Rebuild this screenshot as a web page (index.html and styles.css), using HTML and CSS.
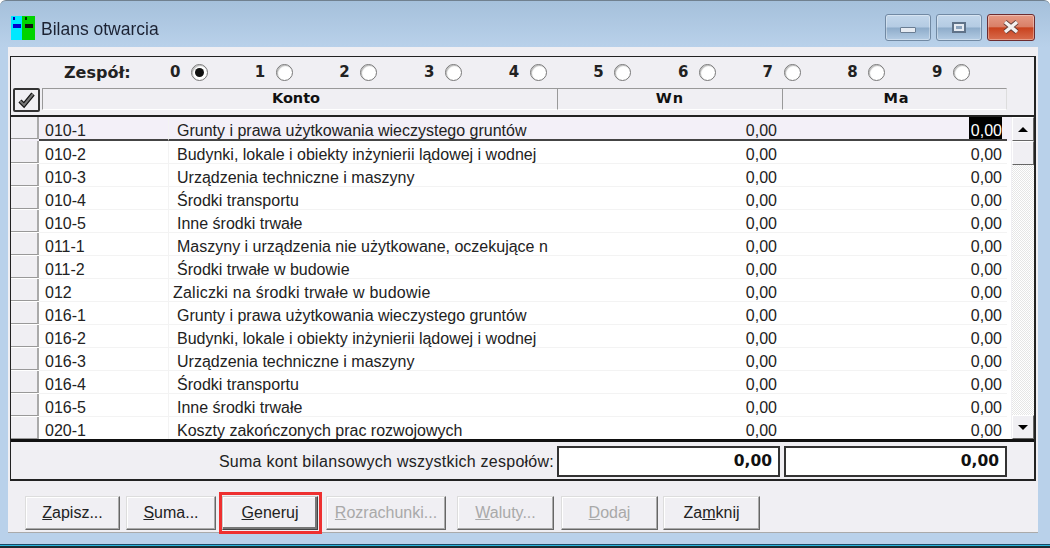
FILE: index.html
```html
<!DOCTYPE html>
<html lang="pl">
<head>
<meta charset="utf-8">
<title>Bilans otwarcia</title>
<link rel="stylesheet" href="styles.css">
</head>
<body>
<div class="window">
  <div class="titlebar">
    <svg class="app-icon" width="24" height="24" viewBox="0 0 24 24">
      <rect width="11" height="24" fill="#00e8ff"/>
      <rect x="11" width="13" height="24" fill="#00d400"/>
      <rect x="2" y="1" width="2" height="3" fill="#0000c0"/>
      <rect x="14" y="1" width="2" height="3" fill="#003000"/>
      <rect x="2" y="8" width="8" height="4" fill="#0000d0"/>
      <rect x="14" y="8" width="8" height="4" fill="#101010"/>
    </svg>
    <span class="title">Bilans otwarcia</span>
    <div class="controls">
      <div class="ctl"><span class="glyph-min"></span></div>
      <div class="ctl"><span class="glyph-max"></span></div>
      <div class="ctl close">
        <svg width="18" height="14" viewBox="0 0 18 14"><path d="M3 2 L15 12 M15 2 L3 12" stroke="#5d3a36" stroke-width="5" fill="none"/><path d="M3 2 L15 12 M15 2 L3 12" stroke="#f4f1f0" stroke-width="3.4" fill="none"/></svg>
      </div>
    </div>
  </div>
  <div class="client">
    <div class="panel">
      <div class="teams">
        <span class="team-label">Zespół:</span>
        <div class="team-list">
          <div class="team"><b>0</b><span class="radio on"></span></div>
          <div class="team"><b>1</b><span class="radio"></span></div>
          <div class="team"><b>2</b><span class="radio"></span></div>
          <div class="team"><b>3</b><span class="radio"></span></div>
          <div class="team"><b>4</b><span class="radio"></span></div>
          <div class="team"><b>5</b><span class="radio"></span></div>
          <div class="team"><b>6</b><span class="radio"></span></div>
          <div class="team"><b>7</b><span class="radio"></span></div>
          <div class="team"><b>8</b><span class="radio"></span></div>
          <div class="team"><b>9</b><span class="radio"></span></div>
        </div>
      </div>
      <div class="head">
        <div class="check-btn">
          <svg width="20" height="18" viewBox="0 0 20 18"><path d="M3 10 L7 14 L16 3" stroke="#111" stroke-width="4.4" fill="none"/><path d="M3 10 L7 14 L16 3" stroke="#777" stroke-width="2" fill="none"/></svg>
        </div>
        <div class="hcell konto">Konto</div>
        <div class="hcell wn">Wn</div>
        <div class="hcell ma">Ma</div>
      </div>
      <div class="grid-area">
        <div class="rows">
          <div class="row first"><i class="mark"></i><span class="code">010-1</span><span class="name">Grunty i prawa użytkowania wieczystego gruntów</span><span class="num">0,00</span><span class="num"><em class="sel">0,00</em></span></div>
          <div class="row"><i class="mark"></i><span class="code">010-2</span><span class="name">Budynki, lokale i obiekty inżynierii lądowej i wodnej</span><span class="num">0,00</span><span class="num">0,00</span></div>
          <div class="row"><i class="mark"></i><span class="code">010-3</span><span class="name">Urządzenia techniczne i maszyny</span><span class="num">0,00</span><span class="num">0,00</span></div>
          <div class="row"><i class="mark"></i><span class="code">010-4</span><span class="name">Środki transportu</span><span class="num">0,00</span><span class="num">0,00</span></div>
          <div class="row"><i class="mark"></i><span class="code">010-5</span><span class="name">Inne środki trwałe</span><span class="num">0,00</span><span class="num">0,00</span></div>
          <div class="row"><i class="mark"></i><span class="code">011-1</span><span class="name">Maszyny i urządzenia nie użytkowane, oczekujące n</span><span class="num">0,00</span><span class="num">0,00</span></div>
          <div class="row"><i class="mark"></i><span class="code">011-2</span><span class="name">Środki trwałe w budowie</span><span class="num">0,00</span><span class="num">0,00</span></div>
          <div class="row"><i class="mark"></i><span class="code">012</span><span class="name shifted">Zaliczki na środki trwałe w budowie</span><span class="num">0,00</span><span class="num">0,00</span></div>
          <div class="row"><i class="mark"></i><span class="code">016-1</span><span class="name">Grunty i prawa użytkowania wieczystego gruntów</span><span class="num">0,00</span><span class="num">0,00</span></div>
          <div class="row"><i class="mark"></i><span class="code">016-2</span><span class="name">Budynki, lokale i obiekty inżynierii lądowej i wodnej</span><span class="num">0,00</span><span class="num">0,00</span></div>
          <div class="row"><i class="mark"></i><span class="code">016-3</span><span class="name">Urządzenia techniczne i maszyny</span><span class="num">0,00</span><span class="num">0,00</span></div>
          <div class="row"><i class="mark"></i><span class="code">016-4</span><span class="name">Środki transportu</span><span class="num">0,00</span><span class="num">0,00</span></div>
          <div class="row"><i class="mark"></i><span class="code">016-5</span><span class="name">Inne środki trwałe</span><span class="num">0,00</span><span class="num">0,00</span></div>
          <div class="row"><i class="mark"></i><span class="code">020-1</span><span class="name">Koszty zakończonych prac rozwojowych</span><span class="num">0,00</span><span class="num">0,00</span></div>
        </div>
        <div class="scrollbar">
          <div class="sb-btn"><span class="arrow up"></span></div>
          <div class="sb-btn"></div>
          <div class="sb-track"></div>
          <div class="sb-btn"><span class="arrow down"></span></div>
        </div>
      </div>
      <div class="totals">
        <span class="totals-label">Suma kont bilansowych wszystkich zespołów:</span>
        <div class="total wn-total">0,00</div>
        <div class="total ma-total">0,00</div>
      </div>
    </div>
    <div class="buttons">
      <div class="btn b-zapisz"><span><u>Z</u>apisz...</span></div>
      <div class="btn b-suma"><span><u>S</u>uma...</span></div>
      <div class="btn b-gen"><span><u>G</u>eneruj</span></div>
      <div class="btn b-roz off"><span><u>R</u>ozrachunki...</span></div>
      <div class="btn b-wal off"><span><u>W</u>aluty...</span></div>
      <div class="btn b-dod off"><span><u>D</u>odaj</span></div>
      <div class="btn b-zam"><span>Za<u>m</u>knij</span></div>
    </div>
  </div>
</div>
</body>
</html>
```
FILE: styles.css
```css
* { box-sizing: border-box; }
html, body { margin: 0; padding: 0; }
body { width: 1050px; height: 548px; background: #fff; overflow: hidden; font-family: "Liberation Sans", Arial, sans-serif; font-size: 16px; color: #222; }
.window { width: 1050px; height: 545px; display: flex; flex-direction: column; padding: 0 12px 11px 8px; border-top: 1px solid #70808f; border-radius: 6px 6px 0 0; border-bottom: 1px solid #1a4a66; box-shadow: 0 1px 0 #26b6dc, 0 3px 0 #1e2a30; background: linear-gradient(180deg, #a5c0db 0, #b9d1ea 46px, #b9d1ea 100%); filter: blur(.35px); }
.titlebar { height: 46px; flex: none; display: flex; align-items: center; padding: 9px 0 0 3px; }
.app-icon { display: block; margin-top: -1px; }
.title { margin-left: 6px; margin-top: 2px; font-size: 17.5px; color: #1c2233; }
.controls { margin-left: auto; display: flex; gap: 5px; margin-top: -3px; margin-right: 3px; }
.ctl { width: 46px; height: 27px; border: 1px solid #7189a3; border-radius: 3px; background: linear-gradient(180deg, #c3d7eb 0, #b4cbe3 48%, #8eacca 52%, #b4cce4 100%); display: flex; align-items: center; justify-content: center; box-shadow: inset 0 0 0 1px rgba(255,255,255,.35); }
.close { width: 48px; background: linear-gradient(180deg, #e59a86 0, #d98068 46%, #c9431f 52%, #d86c4d 100%); border-color: #6d2c30; }
.glyph-min { width: 16px; height: 6px; background: #e6ebf2; border: 1px solid #6a7d93; border-radius: 1px; margin-top: 6px; }
.glyph-max { width: 14px; height: 11px; border: 2px solid #5f7288; background: #e6ebf2; box-shadow: inset 0 0 0 2px #e6ebf2, inset 0 0 0 4px #8ba3bd; }
.client { width: 1030px; height: 486px; flex: none; background: #f0eff3; padding: 9px 2px 0 2px; border-bottom: 1px solid #aaa; display: flex; flex-direction: column; }
.panel { width: 1026px; height: 425px; flex: none; border: 1px solid #222; border-right-width: 2px; border-bottom-width: 2px; display: flex; flex-direction: column; }
.teams { height: 30px; flex: none; display: flex; align-items: center; font-family: "DejaVu Sans", sans-serif; font-weight: 700; font-size: 15px; }
.team-label { width: 155px; padding-left: 53px; font-size: 16px; white-space: nowrap; }
.team-list { display: flex; }
.team { width: 84.67px; display: flex; align-items: center; gap: 11px; padding-left: 4px; }
.team b { width: 10px; }
.radio { width: 17px; height: 17px; border-radius: 50%; border: 1px solid #777; background: #fff; box-shadow: inset 1px 1px 1px #bbb; display: block; position: relative; }
.radio.on::after { content: ""; position: absolute; left: 3px; top: 3px; width: 9px; height: 9px; border-radius: 50%; background: #111; }
.head { height: 30px; flex: none; display: flex; align-items: flex-start; border-bottom: 2px solid #222; padding: 1px 0 0 2px; font-family: "DejaVu Sans", sans-serif; font-weight: 700; font-size: 14.5px; }
.check-btn { width: 27px; height: 24px; border: 2px solid #333; border-radius: 2px; display: flex; align-items: center; justify-content: center; background: #f0eff3; }
.hcell { height: 22px; border-left: 1px solid #999; border-top: 1px solid #999; border-bottom: 1px solid #fff; text-align: center; line-height: 18px; color: #111; }
.konto { width: 515px; margin-left: 2px; padding-right: 8px; }
.wn { width: 225px; letter-spacing: 1px; }
.ma { width: 225px; letter-spacing: 1px; padding-left: 4px; border-right: 1px solid #ddd; }
.grid-area { flex: 1; display: flex; min-height: 0; }
.rows { width: 1000px; flex: none; }
.row { height: 23px; display: grid; grid-template-columns: 28px 129px 387px 227px 225px; background: #fff; align-items: stretch; line-height: 19px; }
.row.first { background: #f3f0f8; height: 24px; }
.row span { white-space: nowrap; overflow: hidden; padding-top: 4px; border-bottom: 1px solid #f3f3f3; }
.row.first span { border-bottom: 2px solid #444; }
.mark { display: block; height: 22px; background: #f0eff3; border-right: 2px solid #aaa; border-bottom: 1px solid #999; }
.row span.code { padding-left: 6px; }
.row span.name { padding-left: 8px; border-left: 1px solid #f3f3f3; }
.row span.name.shifted { padding-left: 4px; letter-spacing: .22px; }
.row span.num { text-align: right; padding-right: 5px; }
.sel { font-style: normal; background: #000; color: #fff; display: inline-block; width: 33px; height: 22px; margin-top: -4px; padding-top: 4px; vertical-align: top; text-align: right; overflow: hidden; }
.scrollbar { width: 24px; margin-left: 1px; display: flex; flex-direction: column; background: repeating-conic-gradient(#e6e6e6 0 25%, #fff 0 50%) 0 0 / 2px 2px; }
.sb-track { flex: 1; }
.sb-btn { height: 24px; flex: none; background: #f0eff3; border: 1px solid; border-color: #fff #666 #666 #fff; display: flex; align-items: center; justify-content: center; }
.arrow { width: 0; height: 0; border-left: 5px solid transparent; border-right: 5px solid transparent; }
.arrow.up { border-bottom: 5px solid #000; }
.arrow.down { border-top: 5px solid #000; }
.totals { flex: none; height: 40px; border-top: 3px solid #111; display: flex; align-items: center; padding-top: 2px; }
.totals-label { width: 543px; margin-right: 3px; text-align: right; letter-spacing: .25px; white-space: nowrap; }
.total { height: 31px; background: #fff; border: 2px solid #333; text-align: right; font-family: "DejaVu Sans", sans-serif; font-weight: 700; font-size: 15.5px; line-height: 27px; padding-right: 6px; color: #111; }
.wn-total { width: 223px; }
.ma-total { width: 223px; margin-left: 4px; }
.buttons { display: flex; align-items: center; padding: 15px 0 0 15px; }
.btn { height: 34px; background: #f0eff3; border: 1px solid; border-color: #ddd #666 #666 #ddd; box-shadow: inset -1px -1px 0 #aaa, inset 1px 1px 0 #fff; display: flex; align-items: center; justify-content: center; }
.b-zapisz { width: 95px; }
.b-suma { width: 90px; margin-left: 6px; }
.b-gen { width: 96px; margin-left: 6px; position: relative; border-color: #ccc #444 #444 #ccc; box-shadow: inset -2px -2px 0 #777, inset 1px 1px 0 #fff; }
.b-gen::after { content: ""; position: absolute; left: -4px; right: -5px; top: -5px; bottom: -5px; border: 3px solid #ee3030; }
.b-roz { width: 120px; margin-left: 8px; }
.b-wal { width: 97px; margin-left: 11px; }
.b-dod { width: 97px; margin-left: 7px; }
.b-zam { width: 97px; margin-left: 5px; }
.off { color: #a9a9a9; }
```
